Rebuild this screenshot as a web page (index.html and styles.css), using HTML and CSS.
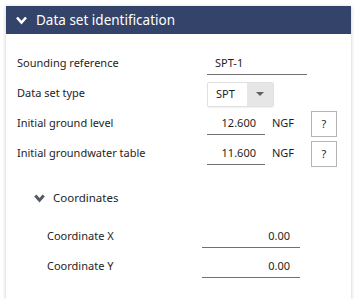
FILE: index.html
```html
<!DOCTYPE html>
<html lang="en">
<head>
    <meta charset="UTF-8">
    <meta name="viewport" content="width=device-width, initial-scale=1.0">
    <title>Data set identification</title>
    <link rel="stylesheet" href="styles.css">
</head>
<body>

<div class="panel">
    <div class="panel-header">
        <svg class="chevron" width="11" height="9" viewBox="0 0 11 9">
            <path d="M1 1.5 L5.5 6.5 L10 1.5" fill="none" stroke="#ffffff" stroke-width="2.6"/>
        </svg>
        <span>Data set identification</span>
    </div>

    <div class="panel-body">
        <div class="row">
            <label class="field-label">Sounding reference</label>
            <input type="text" class="text-input wide" value="SPT-1" readonly>
        </div>
        <div class="row">
            <label class="field-label">Data set type</label>
            <div class="combo">
                <span class="combo-value">SPT</span>
                <span class="combo-arrow"></span>
            </div>
        </div>
        <div class="row">
            <label class="field-label">Initial ground level</label>
            <input type="text" class="text-input number" value="12.600" readonly>
            <span class="unit">NGF</span>
            <button class="help">?</button>
        </div>
        <div class="row">
            <label class="field-label">Initial groundwater table</label>
            <input type="text" class="text-input number" value="11.600" readonly>
            <span class="unit">NGF</span>
            <button class="help">?</button>
        </div>

        <div class="sub-section">
            <div class="sub-header">
                <svg class="chevron" width="11" height="9" viewBox="0 0 11 9">
                    <path d="M1.3 1.5 L5.5 6.3 L9.7 1.5" fill="none" stroke="#555b63" stroke-width="3"/>
                </svg>
                <span>Coordinates</span>
            </div>
            <div class="row sub-row">
                <label class="field-label">Coordinate X</label>
                <input type="text" class="text-input coord" value="0.00" readonly>
            </div>
            <div class="row sub-row">
                <label class="field-label">Coordinate Y</label>
                <input type="text" class="text-input coord" value="0.00" readonly>
            </div>
        </div>
    </div>
</div>

</body>
</html>
```

FILE: styles.css
```css
body {
    margin: 0;
    background-color: #ffffff;
    font-family: "Noto Sans", "Open Sans", sans-serif;
    color: #1e1e1e;
}
.panel {
    margin: 6px 0 0 6px;
    width: 345px;
    background-color: #ffffff;
    box-shadow: 0 1px 4px rgba(0, 0, 0, 0.22);
}
.panel-header {
    height: 28px;
    background-color: #344369;
    color: #ffffff;
    display: flex;
    align-items: center;
    padding-left: 10px;
    font-size: 13.5px;
}
.panel-header .chevron {
    margin-right: 9px;
}
.panel-body {
    padding: 15px 0 17px 11px;
}
.row {
    display: flex;
    align-items: center;
    height: 30px;
    font-size: 11px;
}
.field-label {
    width: 190px;
    flex: none;
    margin-top: -3px;
}
.text-input {
    box-sizing: border-box;
    height: 22px;
    border: none;
    border-bottom: 1px solid #707070;
    outline: none;
    font-family: inherit;
    font-size: 11px;
    color: #1e1e1e;
    background: transparent;
    padding: 0 0 3px 0;
}
.wide {
    width: 100px;
    padding-left: 8px;
}
.number {
    width: 58px;
    text-align: right;
    padding-right: 9px;
}
.unit {
    width: 39px;
    margin-left: 7px;
    margin-top: -3px;
    flex: none;
}
.help {
    box-sizing: border-box;
    width: 26px;
    height: 26px;
    border: 1px solid #b4b4b4;
    background: #ffffff;
    font-family: inherit;
    font-size: 11px;
    color: #1e1e1e;
    padding: 0 0 2px 0;
}
.combo {
    display: flex;
    height: 25px;
    box-sizing: border-box;
    border: 1px solid #e0e0e0;
    border-radius: 2px;
    box-shadow: 0 1px 1px rgba(0, 0, 0, 0.06);
}
.combo-value {
    width: 39px;
    padding: 0 0 2px 8px;
    box-sizing: border-box;
    display: flex;
    align-items: center;
}
.combo-arrow {
    width: 26px;
    background-color: #e6e6e6;
    display: flex;
    align-items: center;
    justify-content: center;
}
.combo-arrow::after {
    content: "";
    border-left: 4px solid transparent;
    border-right: 4px solid transparent;
    border-top: 4px solid #606060;
}
.sub-section {
    margin-top: 14px;
}
.sub-header {
    height: 30px;
    display: flex;
    align-items: center;
    padding-left: 17px;
    font-size: 11.5px;
}
.sub-header span {
    margin-top: -2px;
}
.sub-header .chevron {
    margin-right: 8px;
}
.sub-header + .sub-row {
    margin-top: 9px;
}
.sub-row {
    padding-left: 30px;
}
.sub-row .field-label {
    width: 155px;
}
.coord {
    width: 98px;
    text-align: right;
    padding-right: 10px;
}
```
